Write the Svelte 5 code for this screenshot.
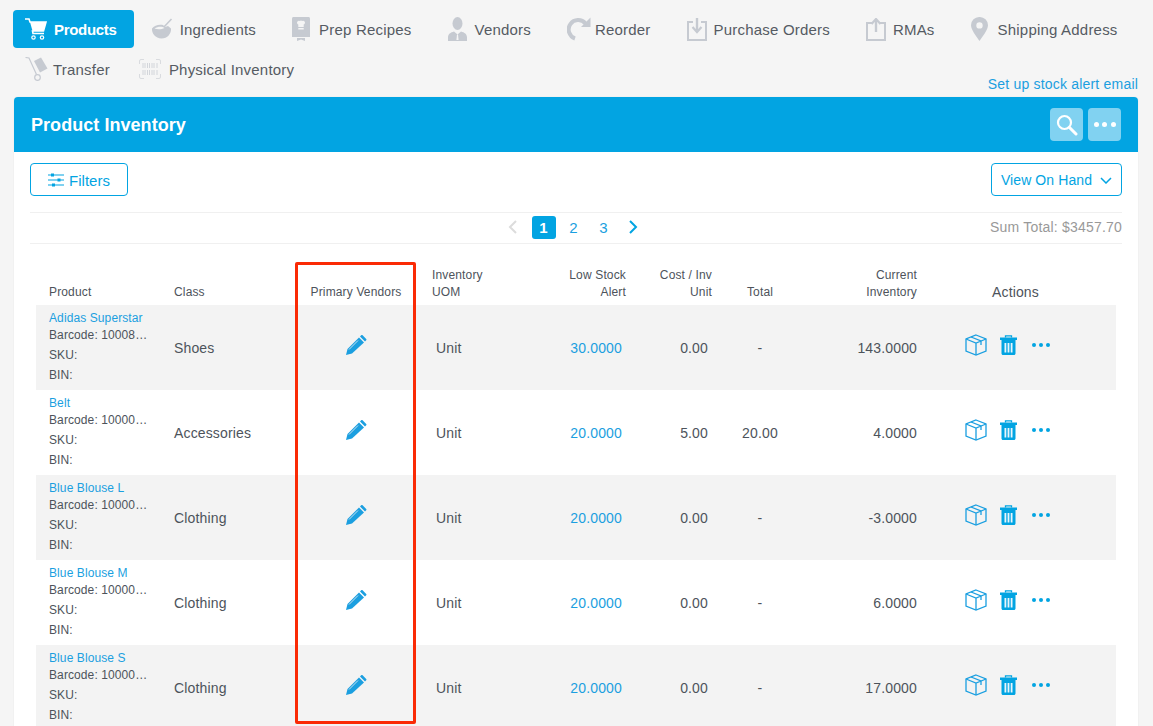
<script>
  // Tabs above the panel
  const tabs = [
    { label: "Products", icon: "cart", w: 22, active: true },
    { label: "Ingredients", icon: "bowl", w: 22 },
    { label: "Prep Recipes", icon: "book", w: 20 },
    { label: "Vendors", icon: "user", w: 20 },
    { label: "Reorder", icon: "reorder", w: 21 },
    { label: "Purchase Orders", icon: "inbox", w: 20 },
    { label: "RMAs", icon: "outbox", w: 20 },
    { label: "Shipping Address", icon: "pin", w: 20 },
    { label: "Transfer", icon: "truck", w: 21 },
    { label: "Physical Inventory", icon: "barcode", w: 23 },
  ];

  const products = [
    { name: "Adidas Superstar", barcode: "Barcode: 10008…", cls: "Shoes", alert: "30.0000", cost: "0.00", total: "-", current: "143.0000" },
    { name: "Belt", barcode: "Barcode: 10000…", cls: "Accessories", alert: "20.0000", cost: "5.00", total: "20.00", current: "4.0000" },
    { name: "Blue Blouse L", barcode: "Barcode: 10000…", cls: "Clothing", alert: "20.0000", cost: "0.00", total: "-", current: "-3.0000" },
    { name: "Blue Blouse M", barcode: "Barcode: 10000…", cls: "Clothing", alert: "20.0000", cost: "0.00", total: "-", current: "6.0000" },
    { name: "Blue Blouse S", barcode: "Barcode: 10000…", cls: "Clothing", alert: "20.0000", cost: "0.00", total: "-", current: "17.0000" },
  ];
</script>

{#snippet tabIcon(name)}
  {#if name === "cart"}
    <svg viewBox="0 0 22 22" width="22" height="22">
      <path d="M0 1h4l1 3h16l-2.500 9H7.500l.5 2.500h11" fill="none" stroke="currentColor" stroke-width="1.600" />
      <path d="M5 4h16l-2.500 9h-11z" fill="currentColor" />
      <circle cx="8.500" cy="19.500" r="1.700" fill="none" stroke="currentColor" stroke-width="1.200" />
      <circle cx="17" cy="19.500" r="1.700" fill="none" stroke="currentColor" stroke-width="1.200" />
    </svg>
  {:else if name === "bowl"}
    <svg viewBox="0 0 22 22" width="22" height="22">
      <path d="M1 10.500c2-3 7-4.500 11-3.500l2 2 3-1 3 2.500c.5 5-3.500 10-9.500 10S.5 15 1 10.500z" fill="currentColor" />
      <path d="M12 10 20.500 1" stroke="currentColor" stroke-width="1.600" />
      <path d="M3.500 10.500c3-2.200 8-2.400 10-.5-3 1.500-7 1.800-10 .5z" fill="#f5f5f5" />
    </svg>
  {:else if name === "book"}
    <svg viewBox="0 0 18 24" width="18" height="24">
      <path d="M0 1.500C0 .7.700 0 1.500 0h15c.800 0 1.500.700 1.500 1.500V20H0z" fill="currentColor" />
      <path d="M5 21h8v3l-4-1.500L5 24z" fill="currentColor" />
      <path d="M5 5.500a2 2 0 0 1 2.800-1.600 2 2 0 0 1 2.400 0A2 2 0 0 1 13 5.500c0 1-.6 1.700-1.300 2V10H6.300V7.500C5.600 7.200 5 6.500 5 5.500z" fill="#f5f5f5" />
      <path d="M6.300 11h5.400v1.500H6.300z" fill="#f5f5f5" />
    </svg>
  {:else if name === "user"}
    <svg viewBox="0 0 19 24" width="19" height="24">
      <ellipse cx="9.500" cy="6.500" rx="5" ry="6.500" fill="currentColor" />
      <path d="M0 20.500c0-3.500 2.500-5 6-6l3.500 3 3.500-3c3.500 1 6 2.500 6 6V24H0z" fill="currentColor" />
      <path d="M9 17.500h1l.6 5.500h-2.200z" fill="#f5f5f5" />
    </svg>
  {:else if name === "reorder"}
    <svg class="wide" viewBox="0 0 24 24" width="24" height="24">
      <path d="M18.500 6.500A9.500 9.500 0 1 0 8 21.500" fill="none" stroke="currentColor" stroke-width="4" />
      <path d="M14 10h9.500V.5z" fill="currentColor" />
    </svg>
  {:else if name === "inbox"}
    <svg viewBox="0 0 20 23" width="20" height="23" fill="none" stroke="currentColor">
      <path d="M6 4H1v18h18V4h-5" stroke-width="2" />
      <path d="M10 0v12" stroke-width="2.400" />
      <path d="M5.500 9 10 14l4.500-5" stroke-width="2.200" />
    </svg>
  {:else if name === "outbox"}
    <svg viewBox="0 0 20 23" width="20" height="23" fill="none" stroke="currentColor">
      <path d="M6 5H1v17h18V5h-5" stroke-width="2" />
      <path d="M10 14V2" stroke-width="2.400" />
      <path d="M5.500 6 10 1l4.500 5" stroke-width="2.200" />
    </svg>
  {:else if name === "pin"}
    <svg viewBox="0 0 17 24" width="17" height="24">
      <path fill-rule="evenodd" d="M8.500 0A8.300 8.300 0 0 0 0 8.300C0 13 5.500 19.500 8.500 24c3-4.500 8.500-11 8.500-15.700A8.300 8.300 0 0 0 8.500 0zm0 5.200a3.200 3.200 0 1 1 0 6.400 3.200 3.200 0 0 1 0-6.400z" fill="currentColor" />
    </svg>
  {:else if name === "truck"}
    <svg class="wide" viewBox="0 0 23 24" width="23" height="24">
      <path d="M.5.500 4 1l7.500 16.500" fill="none" stroke="currentColor" stroke-width="1.200" />
      <path d="M9 4l7-3.500 6.500 11-7.500 4z" fill="currentColor" />
      <circle cx="12.500" cy="20.500" r="2.800" fill="none" stroke="currentColor" stroke-width="1.200" />
    </svg>
  {:else}
    <svg viewBox="0 0 22 20" width="22" height="20" fill="none" stroke="currentColor">
      <path d="M5 .5H2Q.5.500.5 2v3M17 .5h3q1.500 0 1.500 1.500v3M5 19.500H2Q.5 19.500.5 18v-3M17 19.500h3q1.500 0 1.500-1.500v-3" stroke-opacity=".6" />
      <path d="M4 4v5M6 4v5M8.500 4v5M10.500 4v5M13 4v5M15 4v5M18 4v5M4 11v5M6 11v5M8.500 11v5M10.500 11v5M13 11v5M15 11v5M18 11v5" stroke-width=".9" stroke-opacity=".8" />
    </svg>
  {/if}
{/snippet}

<div class="page">
  <nav class="tabs">
    {#each tabs as tab}
      <div class="tab {tab.active ? 'active' : ''} tab-{tab.icon}">
        <span class="tab-icon" style="width: {tab.w}px">{@render tabIcon(tab.icon)}</span>
        <span>{tab.label}</span>
      </div>
    {/each}
    <div class="stock-link">Set up stock alert email</div>
  </nav>

  <section class="panel">
    <header class="panel-head">
      <h1>Product Inventory</h1>
      <div class="head-buttons">
        <button class="head-btn" aria-label="Search">
          <svg viewBox="0 0 22 22" width="22" height="22" fill="none" stroke="#fff">
            <circle cx="8.500" cy="8.500" r="6.500" stroke-width="2.200" />
            <path d="M13.500 13.500 20 20" stroke-width="3" stroke-linecap="round" />
          </svg>
        </button>
        <button class="head-btn" aria-label="More">
          <span class="dots light"><i></i><i></i><i></i></span>
        </button>
      </div>
    </header>

    <div class="toolbar">
      <button class="outline filters">
        <svg viewBox="0 0 16 14" width="16" height="14" fill="none" stroke="currentColor">
          <path d="M0 2h16M0 7h16M0 12h16" stroke-width="1.200" />
          <path d="M3 .5h3v3H3zM9.500 5.500h3v3h-3zM4 10.500h3v3H4z" fill="currentColor" stroke="none" />
        </svg>
        Filters
      </button>
      <button class="outline view">
        View On Hand
        <svg viewBox="0 0 12 7" width="12" height="7" fill="none" stroke="currentColor" stroke-width="1.500">
          <path d="M1 1l5 5 5-5" />
        </svg>
      </button>
    </div>

    <div class="pager-row">
      <div class="pager">
        <svg class="chev prev" viewBox="0 0 9 14" width="9" height="14" fill="none" stroke="#dcdcdc" stroke-width="2">
          <path d="M8 1 2 7l6 6" />
        </svg>
        <span class="page-num current">1</span>
        <span class="page-num">2</span>
        <span class="page-num">3</span>
        <svg class="chev next" viewBox="0 0 9 14" width="9" height="14" fill="none" stroke="#02a4e2" stroke-width="2">
          <path d="M1 1l6 6-6 6" />
        </svg>
      </div>
      <div class="sum">Sum Total: $3457.70</div>
    </div>

    <div class="table-wrap">
      <table>
        <colgroup>
          <col style="width: 125px" />
          <col style="width: 135px" />
          <col style="width: 120px" />
          <col style="width: 100px" />
          <col style="width: 124px" />
          <col style="width: 86px" />
          <col style="width: 68px" />
          <col style="width: 137px" />
          <col />
        </colgroup>
        <thead>
          <tr>
            <th class="first">Product</th>
            <th class="first">Class</th>
            <th class="center">Primary Vendors</th>
            <th class="uom">Inventory<br />UOM</th>
            <th class="right">Low Stock<br />Alert</th>
            <th class="right">Cost / Inv<br />Unit</th>
            <th class="center">Total</th>
            <th class="right">Current<br />Inventory</th>
            <th class="actions-head">Actions</th>
          </tr>
        </thead>
        <tbody>
          {#each products as p}
            <tr>
              <td class="first product">
                <div class="p-name">{p.name}</div>
                <div class="p-barcode">{p.barcode}</div>
                <div class="p-meta">SKU:</div>
                <div class="p-meta">BIN:</div>
              </td>
              <td class="first">{p.cls}</td>
              <td class="center">
                <svg class="pencil" viewBox="0 0 21 20" width="21" height="20">
                  <path d="M0 20l1.500-6L13 2.500l5 5L6 18.500z" fill="#1b9fe0" />
                  <path d="M14 1.500 15.200.3c.4-.4 1-.4 1.400 0l3.600 3.600c.4.400.4 1 0 1.400L19 6.500z" fill="#1b9fe0" />
                  <path d="M3 14.500l9-9" stroke="#f3f3f3" stroke-width=".8" />
                </svg>
              </td>
              <td class="unit">Unit</td>
              <td class="right blue">{p.alert}</td>
              <td class="right">{p.cost}</td>
              <td class="center">{p.total}</td>
              <td class="right current">{p.current}</td>
              <td class="actions">
                <div class="action-icons">
                  <svg viewBox="0 0 22 22" width="22" height="22" fill="none" stroke="#1b9fe0" stroke-width="1.300">
                    <path d="M11 1 21 5v12l-10 4-10-4V5z" />
                    <path d="M1 5l10 4 10-4M11 9v12M6 3l10 4v4" />
                  </svg>
                  <svg viewBox="0 0 17 20" width="17" height="20">
                    <path d="M5.500 2.500V.8h6v1.700" fill="none" stroke="#02a4e2" stroke-width="1.300" />
                    <path d="M0 2.500h17V5H0zM1.500 5h14v13.500c0 .8-.7 1.500-1.500 1.500H3c-.8 0-1.500-.7-1.500-1.500z" fill="#02a4e2" />
                    <path d="M4.500 8h1.800v9.500H4.500zM7.600 8h1.800v9.500H7.600zM10.700 8h1.800v9.500h-1.800z" fill="#e8f5fc" />
                  </svg>
                  <span class="dots"><i></i><i></i><i></i></span>
                </div>
              </td>
            </tr>
          {/each}
        </tbody>
      </table>
      <div class="highlight"></div>
    </div>
  </section>
</div>

<style>
  :global(body) {
    background: #f5f5f5;
    font-family: "Liberation Sans", Arial, sans-serif;
    color: #4d535b;
  }

  .page {
    height: 100vh;
    overflow: hidden;
  }

  .tabs {
    display: flex;
    flex-wrap: wrap;
    gap: 2px 12px;
    padding: 10px 15px 9px 13px;
  }

  .tab {
    display: flex;
    align-items: center;
    gap: 7px;
    height: 38px;
    padding: 0 12px;
    border-radius: 4px;
    font-size: 15px;
    letter-spacing: 0.2px;
    color: #555b63;
  }

  .tab.active {
    background: #02a4e2;
    color: #fff;
    font-weight: 700;
    letter-spacing: -0.3px;
    padding-right: 17px;
    margin-right: -7px;
  }

  .tab-truck {
    padding-right: 5px;
  }

  .tab-icon {
    display: flex;
    justify-content: flex-start;
    color: #c6cad1;
  }

  .tab.active .tab-icon {
    color: #fff;
  }

  .wide {
    flex: none;
  }

  .stock-link {
    margin-left: auto;
    align-self: flex-end;
    margin-bottom: -5px;
    font-size: 14px;
    line-height: 18px;
    letter-spacing: 0.2px;
    color: #1b9fe0;
  }

  .panel {
    margin: 0 15px 0 14px;
    background: #fff;
    border-radius: 4px 4px 0 0;
    box-shadow: 0 0 1px #ccc;
  }

  .panel-head {
    display: flex;
    align-items: center;
    justify-content: space-between;
    height: 55px;
    padding: 0 17px;
    background: #02a4e2;
    border-radius: 4px 4px 0 0;
  }

  h1 {
    margin: 1px 0 0;
    font-size: 18px;
    font-weight: 700;
    letter-spacing: 0.05px;
    color: #fff;
  }

  .head-buttons {
    display: flex;
    gap: 5px;
  }

  .head-btn {
    display: flex;
    align-items: center;
    justify-content: center;
    width: 33px;
    height: 33px;
    padding: 0;
    border: none;
    border-radius: 4px;
    background: rgba(255, 255, 255, 0.5);
  }

  .dots {
    display: flex;
    gap: 3px;
  }

  .dots i {
    width: 4px;
    height: 4px;
    border-radius: 50%;
    background: #02a4e2;
  }

  .dots.light {
    gap: 3.5px;
  }

  .dots.light i {
    width: 5px;
    height: 5px;
    background: #fff;
  }

  .toolbar {
    display: flex;
    justify-content: space-between;
    padding: 11px 16px 16px;
  }

  .outline {
    display: flex;
    align-items: center;
    justify-content: center;
    height: 33px;
    padding: 1px 0 0;
    border: 1px solid #02a4e2;
    border-radius: 4px;
    background: #fff;
    color: #02a4e2;
    font-family: inherit;
    font-size: 15px;
  }

  .filters {
    gap: 5px;
    width: 98px;
  }

  .view {
    gap: 8px;
    width: 131px;
    font-size: 14px;
    letter-spacing: 0.1px;
  }

  .pager-row {
    position: relative;
    display: flex;
    align-items: center;
    justify-content: center;
    box-sizing: border-box;
    height: 32px;
    padding-bottom: 2px;
    margin: 0 16px;
    border-top: 1px solid #f0f0f0;
    border-bottom: 1px solid #f0f0f0;
  }

  .pager {
    display: flex;
    align-items: center;
    gap: 6px;
    margin-left: -7px;
    font-size: 15px;
    color: #1b9fe0;
  }

  .chev.prev {
    margin: 0 9px 0 5px;
  }

  .chev.next {
    margin: 0 5px 0 7px;
  }

  .page-num {
    width: 24px;
    height: 23px;
    line-height: 23px;
    text-align: center;
    border-radius: 3px;
  }

  .page-num.current {
    background: #02a4e2;
    color: #fff;
    font-weight: 700;
  }

  .sum {
    position: absolute;
    right: 0;
    font-size: 14px;
    letter-spacing: 0.2px;
    color: #999;
  }

  .table-wrap {
    position: relative;
    margin: 0 22px;
    padding-top: 18px;
  }

  table {
    width: 1080px;
    table-layout: fixed;
    border-collapse: collapse;
    font-size: 14px;
    letter-spacing: 0.15px;
  }

  th,
  td {
    box-sizing: border-box;
  }

  th {
    height: 43px;
    padding: 0 14px 4px 0;
    vertical-align: bottom;
    font-size: 12px;
    font-weight: 400;
    line-height: 17px;
    text-align: left;
  }

  td {
    height: 85px;
    padding: 0 14px 0 0;
  }

  tbody tr:nth-child(odd) {
    background: #f3f3f3;
  }

  .first {
    padding-left: 13px;
  }

  th.center {
    padding: 0 0 4px;
    text-align: center;
  }

  td.center {
    padding: 0;
    text-align: center;
  }

  .right {
    text-align: right;
  }

  td.right {
    padding-right: 18px;
  }

  td.current {
    padding-right: 14px;
  }

  .uom {
    padding-left: 16px;
  }

  .unit {
    padding-left: 20px;
  }

  .blue {
    color: #1b9fe0;
  }

  .actions-head {
    padding-left: 61px;
    font-size: 14px;
  }

  .actions {
    padding: 0 0 5px 34px;
  }

  .action-icons {
    display: flex;
    align-items: center;
    gap: 13px;
  }

  .action-icons .dots {
    margin-left: 2px;
  }

  .pencil {
    display: block;
    margin: -5px auto 0;
  }

  .product {
    padding: 5px 12px 0 13px;
    font-size: 12px;
    vertical-align: top;
    line-height: 17px;
    letter-spacing: 0.1px;
  }

  .p-name {
    color: #1b9fe0;
  }

  .p-barcode {
    white-space: nowrap;
  }

  .p-meta {
    margin-top: 3px;
  }

  .highlight {
    position: absolute;
    top: 18px;
    left: 259px;
    width: 121px;
    height: 462px;
    box-sizing: border-box;
    border: 3px solid #fa2a05;
    border-radius: 2px;
    pointer-events: none;
  }
</style>
